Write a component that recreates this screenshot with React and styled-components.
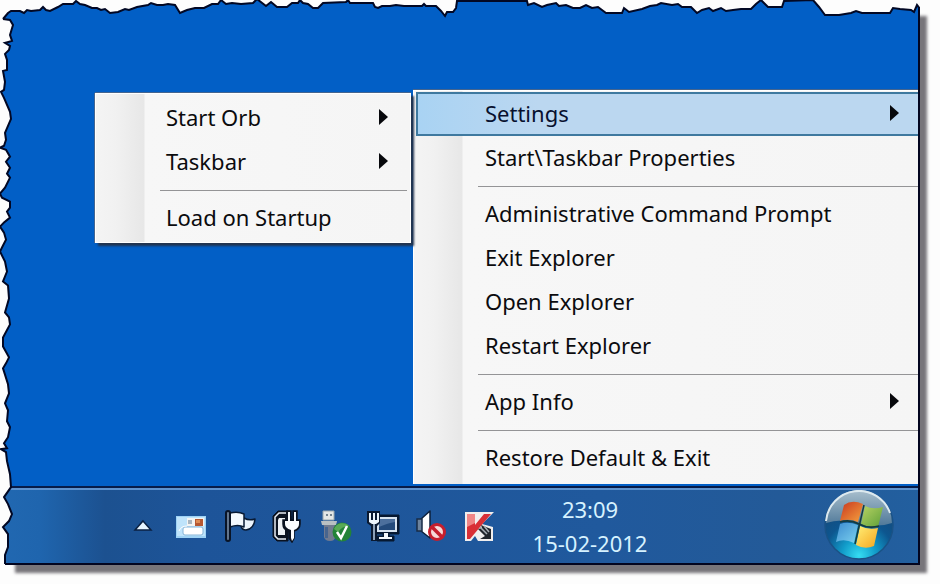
import React from "react";
import styled, { createGlobalStyle } from "styled-components";

const GlobalStyle = createGlobalStyle`
  * { box-sizing: border-box; }
  body { margin: 0; background: #fdfdfd; overflow: hidden; font-family: "Noto Sans", "Open Sans", sans-serif; }
`;

const Page = styled.main`
  padding: 0 20px 18px 0;
`;

const Sheet = styled.section`
  position: relative;
  display: flex;
  flex-direction: column;
  background: #025fc6;
  border-right: 2px solid #02051f;
  border-bottom: 2px solid #02051f;
  box-shadow: 11px 12px 3px -4px #77757a;
`;

const Desktop = styled.div`
  display: flex;
  justify-content: flex-end;
  align-items: flex-start;
  gap: 2px;
  padding: 90px 0 2px 95px;
`;

const MenuPanel = styled.ul`
  list-style: none;
  margin: 0;
  flex: 0 1 ${(p) => p.$basis};
  background: linear-gradient(90deg, #f4f4f4 0, #f1f1f1 20px, #e7e7e7 48px, #f7f7f7 49px, #f5f5f5 100%);
`;

const MainMenu = styled(MenuPanel)`
  padding: 1px 0 4px 2px;
  border-left: 1px solid #fff;
  border-top: 1px solid #fff;
  box-shadow: 0 -1px 0 #45658f;
`;

const SubMenu = styled(MenuPanel)`
  margin-top: 3px;
  padding: 2px 3px 2px 1px;
  border: 1px solid #fff;
  z-index: 1;
  box-shadow: 0 -1px 0 #45658f, -1px 0 0 #45658f, 3px 3px 2px #22344f;
`;

const MenuButton = styled.button`
  display: flex;
  justify-content: space-between;
  align-items: center;
  width: 100%;
  height: 44px;
  padding: 0 19px 2px 67px;
  border: 2px solid ${(p) => (p.$active ? "#3f799f" : "transparent")};
  border-right-width: 0;
  background: ${(p) => (p.$active ? "linear-gradient(90deg, #a9d3f3, #bbd7f0 120px)" : "none")};
  color: ${(p) => (p.$active ? "#07102e" : "#0b0b0e")};
  font: 22px/32px "Noto Sans", "Open Sans", sans-serif;
  text-align: left;
  white-space: nowrap;
`;

const Divider = styled.li`
  height: 12px;
  margin-left: ${(p) => p.$inset};
  padding-top: 6px;
  &::before { content: ""; display: block; border-top: 1px solid #949496; }
`;

const Taskbar = styled.footer`
  display: flex;
  align-items: center;
  height: 77px;
  padding: 0 24px 0 119px;
  border-top: 2px solid #061b48;
  box-shadow: inset 0 2px 0 #5e93cf;
  background: linear-gradient(90deg, #2168b1 0, #1f65ae 40px, #1c5190 105px, #1d5499 200px, #20599d 600px, #235a98 780px, #225f9f 100%);
`;

const Tray = styled.nav`
  display: flex;
`;

const TrayButton = styled.button`
  display: flex;
  justify-content: center;
  width: 48px;
  padding: 0;
  border: 0;
  background: none;
  svg { width: 34px; height: 34px; display: block; }
`;

const Clock = styled.time`
  width: 174px;
  text-align: center;
  color: #d6f2ff;
  font-size: 22px;
  line-height: 34px;
`;

const StartButton = styled.button`
  margin-left: auto;
  padding: 0;
  border: 0;
  background: none;
  svg { width: 72px; height: 72px; display: block; }
`;

const TopTear = styled.svg`
  position: absolute;
  top: 0;
  left: 0;
  width: calc(100% + 2px);
  height: 20px;
`;

const LeftTear = styled.svg`
  position: absolute;
  top: 0;
  left: 0;
  width: 16px;
  height: calc(100% + 2px);
`;

const topLine =
  "L3 19 8 13 11 11 20 11 24 13 27 10 31 11 40 10 43 7 46 10 50 11 58 7 63 4 73 4 76 1 80 4 85 5 92 8 97 8 101 10 105 9 110 13 118 12 125 9 129 10 137 7 148 5 151 3 157 5 163 5 168 4 175 5 180 13 187 10 195 8 204 8 212 4 218 4 221 0 226 4 232 3 241 4 253 3 257 -1 266 6 271 2 277 7 287 7 292 3 298 3 300 0 303 3 308 4 313 8 318 8 323 3 346 2 348 0 350 3 373 3 375 7 378 8 382 6 390 6 396 5 404 6 422 6 424 4 426 6 436 6 441 11 445 16 447 12 453 12 456 8 457 1 475 1 493 1 520 1 527 1 528 5 534 3 542 7 547 5 556 3 559 6 566 5 573 8 580 8 586 5 592 8 598 7 606 13 622 13 624 8 629 12 642 9 650 6 657 5 661 3 672 5 678 4 682 7 691 7 697 13 702 10 709 8 713 11 721 8 726 11 733 10 741 9 751 9 756 4 761 0 768 7 782 7 784 1 813 0 819 7 825 15 839 15 851 13 856 11 862 13 878 13 890 13 893 8 900 9 911 10 914 12 917 5 920 9";
const leftLine =
  "L3 19 10 20 13 25 10 35 12 41 5 43 10 46 9 50 5 54 7 60 7 70 3 71 5 82 4 90 1 92 4 98 10 112 11 119 5 133 6 140 4 146 0 148 6 150 10 157 6 162 10 168 7 174 10 178 5 188 0 194 2 198 10 202 10 208 7 212 10 218 4 223 0 227 4 233 6 240 3 246 0 252 5 262 7 272 3 282 8 286 9 299 5 313 9 318 10 325 3 338 3 347 9 358 6 364 3 369 8 385 9 394 5 404 8 411 7 422 10 428 8 438 4 444 7 449 1 450 6 453 7 462 10 475 11 488 4 498 8 505 12 515 9 522 3 528 8 535 8 548 5 556 5 565";

function TornEdges() {
  return (
    <>
      <LeftTear viewBox="0 0 16 566" preserveAspectRatio="none" aria-hidden="true">
        <path d={`M0 0${leftLine} 5 566 0 566Z`} fill="#fdfdfd" />
        <path d={leftLine.replace("L", "M")} fill="none" stroke="#020824" strokeWidth="2" />
      </LeftTear>
      <TopTear viewBox="0 0 920 20" preserveAspectRatio="none" aria-hidden="true">
        <path d={`M0 0 0 19${topLine} 920 0Z`} fill="#fdfdfd" />
        <path d={topLine.replace("L", "M")} fill="none" stroke="#020824" strokeWidth="2" />
      </TopTear>
    </>
  );
}

const ArrowSvg = styled.svg`
  width: 9px;
  height: 16px;
  flex: none;
`;

const Arrow = () => (
  <ArrowSvg viewBox="0 0 9 16" aria-hidden="true">
    <path d="M0 0 9 8 0 16Z" fill="#07080c" />
  </ArrowSvg>
);

const CaretIcon = () => (
  <svg viewBox="0 0 34 34">
    <path d="M17 12 25 21H9Z" fill="#e9f6ff" stroke="#0b2142" strokeWidth="1.5" />
  </svg>
);

const CardIcon = () => (
  <svg viewBox="0 0 34 34">
    <rect x="2" y="7" width="30" height="22" fill="#9fd3f5" />
    <rect x="3" y="8" width="28" height="19" fill="#bfe4fb" />
    <path d="M13 9h17v8H13z" fill="#f4f4f2" />
    <path d="M21 10h8v7h-8z" fill="#b65832" />
    <path d="M22 11h4v3h-4z" fill="#dd8b55" />
    <path d="M14 11h4v4h-4z" fill="#a9b6c0" />
    <rect x="9" y="18" width="20" height="8" rx="2" fill="#fff" stroke="#86b5d8" />
    <path d="M5 22q2-5 8-5" fill="none" stroke="#fff" />
  </svg>
);

const FlagIcon = () => (
  <svg viewBox="0 0 34 34">
    <path d="M22 9q5 3 11 1-1 10-9 11-4 0-5-4Z" fill="#edf5fd" stroke="#091a33" strokeWidth="1.5" strokeLinejoin="round" />
    <path d="M8 4q8-2 14 1v13q-6-3-14 0Z" fill="#f4f9fe" stroke="#091a33" strokeWidth="1.5" strokeLinejoin="round" />
    <rect x="4" y="2" width="4" height="30" rx="2" fill="#63758c" stroke="#091426" strokeWidth="2" />
  </svg>
);

const PlugIcon = () => (
  <svg viewBox="0 0 34 34">
    <path d="M8 2h10v5h3v16h-3v9H7l-4-4V7Z" fill="#0a1220" stroke="#0a1220" strokeLinejoin="round" />
    <path d="M16 4H9L5 8v19l3 3h8" fill="none" stroke="#e8edf3" strokeWidth="1.5" />
    <path d="M9 9h6v17H8V11Z" fill="#edf1f5" />
    <path d="M17 2v9h-4v4q0 6 6 7v7l3 4 2-4v-7q6-2 6-7v-4h-3V2h-4v9h-2V2Z" fill="#0a1220" stroke="#0a1220" strokeWidth="1.5" />
    <path d="M15 12h14v3q0 4-5 6v8l-2 3-1-3v-8q-6-2-6-6Z" fill="#fafcff" />
    <path d="M19 3v9M25 3v9" stroke="#f4f8fc" strokeWidth="2" />
  </svg>
);

const UsbIcon = () => (
  <svg viewBox="0 0 34 34">
    <path d="M5 2h11v9H5z" fill="#e4e7e6" stroke="#9ba8ad" />
    <path d="M8 5h2v2H8zM12 5h2v2h-2z" fill="#748490" />
    <path d="M3 12h16l-2 5v11q0 4-5 4t-6-4V17Z" fill="#717b90" />
    <path d="M3 12h16l-1 4H4Z" fill="#b9c0c3" />
    <path d="M7 18h3v11H7z" fill="#48658e" />
    <circle cx="24" cy="23" r="9.5" fill="#238338" />
    <path d="M16 20a9 9 0 0 1 15-3q-7 0-11 6Z" fill="#58aa55" />
    <path d="m19 23 4 6 6-12" fill="none" stroke="#fff" strokeWidth="2.5" />
  </svg>
);

const NetworkIcon = () => (
  <svg viewBox="0 0 34 34">
    <path d="M9 6h24v19H23v2h5v5H11v-5h6v-2H9Z" fill="#071831" stroke="#071831" strokeLinejoin="round" />
    <path d="M11 8h20v15H11z" fill="#d7e3ef" />
    <path d="M13 10h16v11H13z" fill="#234a7b" />
    <path d="M13 10h16v3q-7 1-16 5Z" fill="#4c6f9c" />
    <path d="M18 24h4v4h4v2H13v-2h5Z" fill="#f3f8fc" />
    <path d="M1 2h13v12l-3 3v15H5V17l-4-3Z" fill="#0a1930" />
    <path d="M3 4h2v7h2V4h2v7h2V4h2v9l-3 2H6l-3-2Z" fill="#edf5fc" />
    <path d="M8 15v16" stroke="#8ca0b8" strokeWidth="2" />
  </svg>
);

const SpeakerIcon = () => (
  <svg viewBox="0 0 34 34">
    <path d="M7 10 16 2v27L7 22Z" fill="#fff" stroke="#0c203c" strokeWidth="1.5" strokeLinejoin="round" />
    <path d="M3 10h5v12H3z" fill="#6d839d" stroke="#182c47" strokeWidth="1.5" />
    <circle cx="23" cy="23" r="7.5" fill="#f6dad9" stroke="#c51e2d" strokeWidth="3" />
    <path d="m17 17 12 12" stroke="#c51e2d" strokeWidth="3.5" />
  </svg>
);

const ShieldIcon = () => (
  <svg viewBox="0 0 34 34">
    <path d="M3 3h29L20 15l11 3v14H16l-3-5-4 5H3Z" fill="#f0eeee" />
    <path d="M5 5h8v11L22 5h7L8 30H5Z" fill="#d92f36" />
    <path d="M5 5h8v9l-8 4Z" fill="#ef8586" />
    <path d="m19 16 10 4v10H18l5-3-7-7 4-1Z" fill="#20252c" />
    <path d="m18 18 7 7M22 17l5 6" stroke="#a7aeb5" strokeWidth="1.5" />
  </svg>
);

const Orb = () => (
  <svg viewBox="0 0 72 72">
    <defs>
      <radialGradient id="orbBase" cx=".5" cy=".95" r=".85">
        <stop offset="0" stopColor="#35ddf2" />
        <stop offset=".3" stopColor="#119bc9" />
        <stop offset=".6" stopColor="#0d568f" />
        <stop offset="1" stopColor="#174777" />
      </radialGradient>
      <linearGradient id="orbGloss" x2="0" y2="1">
        <stop offset="0" stopColor="#a9bfcd" />
        <stop offset="1" stopColor="#507999" />
      </linearGradient>
      <linearGradient id="redPane" x2="1" y2="1"><stop stopColor="#c83720" /><stop offset="1" stopColor="#f6a23e" /></linearGradient>
      <linearGradient id="greenPane" x2="1" y2="1"><stop stopColor="#b8d364" /><stop offset="1" stopColor="#5d9f38" /></linearGradient>
      <linearGradient id="bluePane" x2="1" y2="1"><stop stopColor="#3c8bcf" /><stop offset="1" stopColor="#7cd2f0" /></linearGradient>
      <linearGradient id="yellowPane" x2="1" y2="1"><stop stopColor="#fff078" /><stop offset="1" stopColor="#f5a51d" /></linearGradient>
    </defs>
    <circle cx="37" cy="35" r="34" fill="url(#orbBase)" stroke="#1a5286" strokeWidth="1.5" />
    <path d="M4 33a33 33 0 0 1 66 0q-15 5-33 0T4 33Z" fill="url(#orbGloss)" />
    <path d="M4 31a33 33 0 0 1 64-8" fill="none" stroke="#dce9ef" strokeWidth="2" />
    <path d="M22 15q8-6 19-1l-5 18q-9-4-18-1Z" fill="url(#redPane)" />
    <path d="M43 16q8 4 18 1l-5 20q-9 1-17-3Z" fill="url(#greenPane)" />
    <path d="M18 34q8-3 18 1l-4 18q-10-5-18-1Z" fill="url(#bluePane)" />
    <path d="M38 36q8 4 18 2l-4 18q-9 4-18-1Z" fill="url(#yellowPane)" />
    <path d="M18 32q10-3 19 2t20 2M42 15 33 54" fill="none" stroke="#163b3d" strokeWidth="1.5" />
  </svg>
);

const mainItems = [
  { label: "Settings", arrow: true, active: true },
  { label: "Start\\Taskbar Properties" },
  null,
  { label: "Administrative Command Prompt" },
  { label: "Exit Explorer" },
  { label: "Open Explorer" },
  { label: "Restart Explorer" },
  null,
  { label: "App Info", arrow: true },
  null,
  { label: "Restore Default & Exit" },
];

const subItems = [
  { label: "Start Orb", arrow: true },
  { label: "Taskbar", arrow: true },
  null,
  { label: "Load on Startup" },
];

const trayItems = [
  ["Show hidden icons", CaretIcon],
  ["Input panel", CardIcon],
  ["Action center", FlagIcon],
  ["Power", PlugIcon],
  ["Safely remove hardware", UsbIcon],
  ["Network", NetworkIcon],
  ["Volume muted", SpeakerIcon],
  ["Antivirus", ShieldIcon],
];

function MenuItems({ items, inset }) {
  return items.map((item, i) =>
    item ? (
      <li key={item.label}>
        <MenuButton type="button" $active={item.active}>
          {item.label}
          {item.arrow && <Arrow />}
        </MenuButton>
      </li>
    ) : (
      <Divider key={i} $inset={inset} />
    )
  );
}

export default function App() {
  return (
    <Page>
      <GlobalStyle />
      <Sheet>
        <Desktop>
          <SubMenu $basis="316px" aria-label="Settings">
            <MenuItems items={subItems} inset="63px" />
          </SubMenu>
          <MainMenu $basis="505px" aria-label="Taskbar menu">
            <MenuItems items={mainItems} inset="62px" />
          </MainMenu>
        </Desktop>
        <Taskbar>
          <Tray aria-label="Notification area">
            {trayItems.map(([label, Icon]) => (
              <TrayButton key={label} type="button" aria-label={label}>
                <Icon />
              </TrayButton>
            ))}
          </Tray>
          <Clock>
            <div>23:09</div>
            <div>15-02-2012</div>
          </Clock>
          <StartButton type="button" aria-label="Start">
            <Orb />
          </StartButton>
        </Taskbar>
        <TornEdges />
      </Sheet>
    </Page>
  );
}
